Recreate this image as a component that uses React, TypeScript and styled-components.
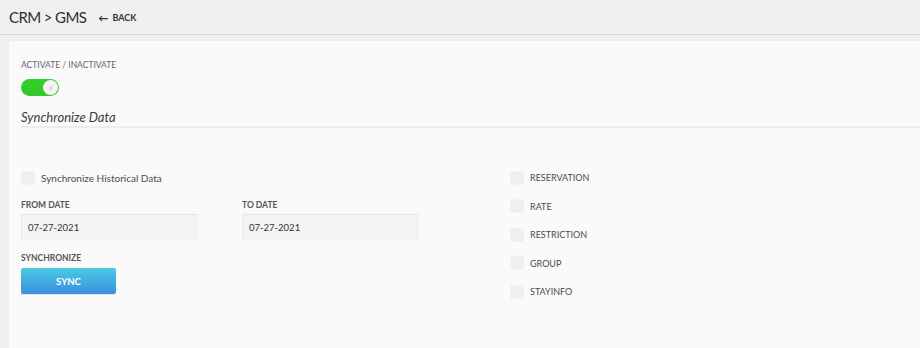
import styled, { createGlobalStyle } from "styled-components"

const Global = createGlobalStyle`
  html, body {
    margin: 0;
    padding: 0;
    background: #efefef;
  }
  body {
    font-family: 'Lato', 'Open Sans', sans-serif;
    color: #444;
  }
`

const syncTypes = ["RESERVATION", "RATE", "RESTRICTION", "GROUP", "STAYINFO"]

function Check({ label, caps }: { label: string, caps?: boolean }) {
  return (
    <CheckRow>
      <Box />
      <CheckLabel caps={caps}>{label}</CheckLabel>
    </CheckRow>
  )
}

export default function App() {
  return (
    <Page>
      <Global />
      <Header>
        <Title>CRM &gt; GMS</Title>
        <Back>
          <Arrow>←</Arrow>BACK
        </Back>
      </Header>
      <Body>
        <Panel>
          <SmallLabel>ACTIVATE / INACTIVATE</SmallLabel>
          <Toggle>
            <Knob><KnobDot /></Knob>
          </Toggle>
          <SectionTitle>Synchronize Data</SectionTitle>
          <Columns>
            <LeftCol>
              <Check label="Synchronize Historical Data" />
              <Dates>
                <Field>
                  <FieldLabel>FROM DATE</FieldLabel>
                  <DateInput readOnly value="07-27-2021" />
                </Field>
                <Field>
                  <FieldLabel>TO DATE</FieldLabel>
                  <DateInput readOnly value="07-27-2021" />
                </Field>
              </Dates>
              <FieldLabel>SYNCHRONIZE</FieldLabel>
              <SyncButton>SYNC</SyncButton>
            </LeftCol>
            <RightCol>
              {syncTypes.map(t => <Check key={t} label={t} caps />)}
            </RightCol>
          </Columns>
        </Panel>
      </Body>
    </Page>
  )
}

const Page = styled.div`
  width: 920px;
  height: 348px;
  overflow: hidden;
  background: #efefef;
`

const Header = styled.div`
  height: 35px;
  display: flex;
  align-items: center;
  padding-left: 9px;
  gap: 12px;
  border-bottom: 1px solid #d6d6d6;
  box-sizing: border-box;
  background: #f0f0f0;
`

const Title = styled.div`
  font-size: 15px;
  color: #2e2e2e;
  letter-spacing: -0.6px;
`

const Back = styled.div`
  font-size: 9px;
  font-weight: 700;
  color: #333;
  display: flex;
  align-items: center;
  gap: 4px;
  padding-top: 1px;
`

const Arrow = styled.span`
  font-size: 10px;
  font-weight: 700;
`

const Body = styled.div`
  padding: 6px 0 0 9px;
`

const Panel = styled.div`
  background: #fafafa;
  height: 307px;
  padding: 19px 0 0 12px;
  box-sizing: border-box;
`

const SmallLabel = styled.div`
  font-size: 8.5px;
  color: #666;
  line-height: 11px;
`

const Toggle = styled.div`
  margin-top: 8px;
  width: 38px;
  height: 17px;
  border-radius: 9px;
  background: linear-gradient(180deg, #2fd02a 0%, #35c62b 100%);
  display: flex;
  align-items: center;
  justify-content: flex-end;
  padding-right: 1px;
  box-sizing: border-box;
`

const Knob = styled.div`
  width: 15px;
  height: 15px;
  border-radius: 50%;
  background: #f4f4f4;
  display: flex;
  align-items: center;
  justify-content: center;
`

const KnobDot = styled.div`
  width: 4px;
  height: 4px;
  background: #dedede;
`

const SectionTitle = styled.div`
  margin-top: 13px;
  font-size: 13px;
  font-style: italic;
  color: #3a3a3a;
  padding-bottom: 1px;
  border-bottom: 2px solid #ececec;
`

const Columns = styled.div`
  display: flex;
  padding-top: 43px;
`

const LeftCol = styled.div`
  width: 489px;
`

const RightCol = styled.div`
  display: flex;
  flex-direction: column;
  gap: 15.5px;
`

const CheckRow = styled.div`
  display: flex;
  align-items: center;
  gap: 6px;
  height: 13px;
`

const Box = styled.div`
  width: 12px;
  height: 12px;
  background: #efefef;
  border: 1px solid #f3f3f3;
  border-radius: 1px;
`

const CheckLabel = styled.span<{ caps?: boolean }>`
  font-size: ${p => p.caps ? "9px" : "10px"};
  color: #4a4a4a;
`

const Dates = styled.div`
  display: flex;
  gap: 44px;
  margin-top: 16px;
  margin-bottom: 13px;
`

const Field = styled.div`
  display: flex;
  flex-direction: column;
`

const FieldLabel = styled.div`
  font-size: 8.5px;
  font-weight: 700;
  color: #555;
  line-height: 11px;
  margin-bottom: 3px;
`

const DateInput = styled.input`
  width: 177px;
  height: 26px;
  box-sizing: border-box;
  border: none;
  border-top: 1px solid #e8e8e8;
  border-left: 1px solid #e8e8e8;
  background: #f3f3f3;
  padding: 0 6px;
  font-family: 'Lato', sans-serif;
  font-size: 9.5px;
  color: #333;
  outline: none;
`

const SyncButton = styled.button`
  margin-top: 1px;
  width: 95px;
  height: 26px;
  border: none;
  border-radius: 2px;
  background: linear-gradient(180deg, #4bcbe3 0%, #3a8ee0 100%);
  color: #fff;
  font-family: 'Lato', sans-serif;
  font-size: 9.5px;
  font-weight: 700;
  cursor: pointer;
  box-shadow: 0 1px 0 #d8e6f0;
`
